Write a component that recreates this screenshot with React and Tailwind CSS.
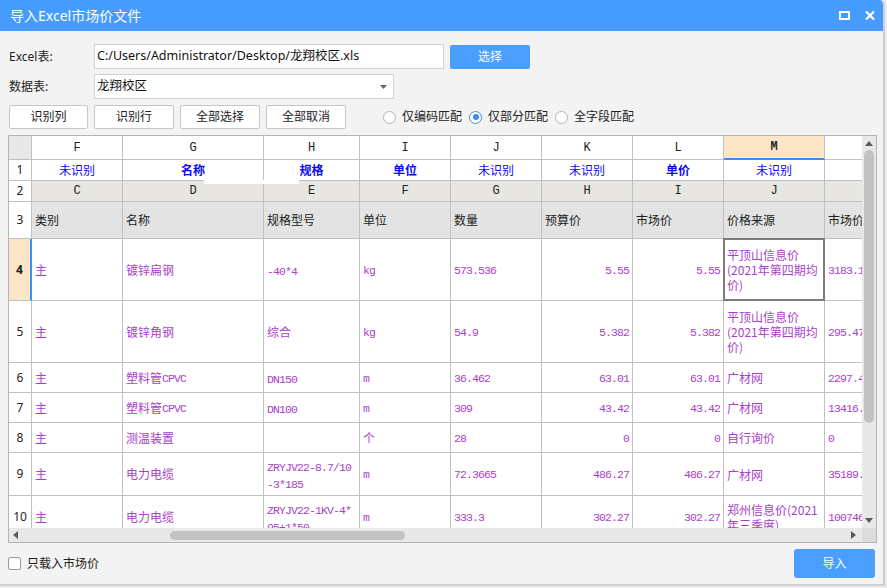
import React from "react";

const W = ["w-[23px]", "w-[91px]", "w-[141px]", "w-[96px]", "w-[91px]", "w-[91px]", "w-[91px]", "w-[91px]", "w-[101px]", "w-[100px]"];
const CJK = /[\u2E80-\u9FFF\uFF00-\uFFEF\u3000-\u303F]/;
const PURPLE = "text-[#a83fc8]";

function Mix({ text }) {
  const parts = text.split(/([\u2E80-\u9FFF\uFF00-\uFFEF\u3000-\u303F]+)/).filter(Boolean);
  return parts.map((p, i) =>
    CJK.test(p) ? (
      <span key={i} className="font-['Noto_Sans_CJK_SC',sans-serif] text-[12px]">{p}</span>
    ) : (
      <span key={i} className="relative top-[1px] font-['Liberation_Mono',monospace] text-[11.5px] tracking-[-0.9px]">{p}</span>
    )
  );
}

function Cell({ i, h, className = "", children }) {
  return (
    <div className={`${W[i]} ${h} shrink-0 border-r border-b border-[#c0c0c0] flex items-center overflow-hidden whitespace-nowrap ${className}`}>
      {children}
    </div>
  );
}

const rows = [
  { n: "4", h: "h-[62px]", sel: true, c: ["主", "镀锌扁钢", ["-40*4"], "kg", "573.536", "5.55", "5.55", ["平顶山信息价", "(2021年第四期均", "价)"], "3183.13"] },
  { n: "5", h: "h-[62px]", c: ["主", "镀锌角钢", ["综合"], "kg", "54.9", "5.382", "5.382", ["平顶山信息价", "(2021年第四期均", "价)"], "295.47"] },
  { n: "6", h: "h-[30px]", c: ["主", "塑料管CPVC", ["DN150"], "m", "36.462", "63.01", "63.01", ["广材网"], "2297.41"] },
  { n: "7", h: "h-[30px]", c: ["主", "塑料管CPVC", ["DN100"], "m", "309", "43.42", "43.42", ["广材网"], "13416.78"] },
  { n: "8", h: "h-[30px]", c: ["主", "测温装置", [""], "个", "28", "0", "0", ["自行询价"], "0"] },
  { n: "9", h: "h-[43px]", c: ["主", "电力电缆", ["ZRYJV22-8.7/10", "-3*185"], "m", "72.3665", "486.27", "486.27", ["广材网"], "35189.66"] },
  { n: "10", h: "h-[43px]", c: ["主", "电力电缆", ["ZRYJV22-1KV-4*", "95+1*50"], "m", "333.3", "302.27", "302.27", ["郑州信息价(2021", "年三季度)"], "100746.5"] },
];

const row1 = [
  { t: "未识别" }, { t: "名称", b: true }, { t: "规格", b: true }, { t: "单位", b: true },
  { t: "未识别" }, { t: "未识别" }, { t: "单价", b: true }, { t: "未识别" }, { t: "" },
];
const row2 = ["C", "D", "E", "F", "G", "H", "I", "J", ""];
const row3 = ["类别", "名称", "规格型号", "单位", "数量", "预算价", "市场价", "价格来源", "市场价"];
const colLetters = ["F", "G", "H", "I", "J", "K", "L", "M", ""];

function RowNum({ n, h, sel }) {
  return (
    <Cell
      i={0}
      h={h}
      className={`justify-center font-['Noto_Sans',sans-serif] text-[12px] text-[#222] ${sel ? "bg-[#fde6c8] font-bold border-r-2 border-r-[#3d8eff]" : "bg-white"}`}
    >
      {n}
    </Cell>
  );
}

function Radio({ checked, label }) {
  return (
    <div className="flex items-center gap-[6px]">
      <div className={`w-[13px] h-[13px] rounded-full border bg-white flex items-center justify-center ${checked ? "border-[#3b8ef0]" : "border-[#b4b4b4]"}`}>
        {checked && <div className="w-[6px] h-[6px] rounded-full bg-[#3b8ef0]" />}
      </div>
      <span className="text-[12px] text-[#222]">{label}</span>
    </div>
  );
}

function Btn({ w, children }) {
  return (
    <div className={`${w} h-[24px] bg-white border border-[#c6c6c6] rounded-[2px] flex items-center justify-center text-[12px] text-[#222]`}>
      {children}
    </div>
  );
}

export default function App() {
  return (
    <div className="w-[887px] h-[588px] bg-[#ececec] overflow-hidden font-['Noto_Sans','Noto_Sans_CJK_SC',sans-serif]">
      <div className="w-[885px] h-[586px] bg-[#f3f3f3] flex flex-col border-r-2 border-b-2 border-[#cfcfcf] rounded-tr-[5px] overflow-hidden">
        {/* title bar */}
        <div className="h-[31px] shrink-0 bg-[#459cfe] flex items-center pl-[10px] text-white text-[14px]">
          <span>导入Excel市场价文件</span>
          <div className="ml-auto flex items-center gap-[15px] mr-[8px]">
            <svg width="11" height="9" viewBox="0 0 11 9">
              <rect x="1" y="1" width="9" height="7" fill="none" stroke="white" strokeWidth="2" />
            </svg>
            <svg width="10" height="9" viewBox="0 0 10 9">
              <path d="M1 0.5 L9 8.5 M9 0.5 L1 8.5" stroke="white" strokeWidth="2.2" />
            </svg>
          </div>
        </div>

        {/* body */}
        <div className="flex flex-col px-[8px]">
          <div className="mt-[13px] flex items-center h-[25px] pl-[1px]">
            <span className="w-[85px] text-[12px] text-[#222]">Excel表:</span>
            <div className="w-[350px] h-[25px] bg-white border border-[#d2d2d2] flex items-center pl-[2px] text-[12.5px] text-[#111]">
              C:/Users/Administrator/Desktop/龙翔校区.xls
            </div>
            <div className="ml-[6px] w-[80px] h-[24px] bg-[#4a9efe] rounded-[2px] flex items-center justify-center text-white text-[12px]">选择</div>
          </div>
          <div className="mt-[5px] flex items-center h-[25px] pl-[1px]">
            <span className="w-[85px] text-[12px] text-[#222]">数据表:</span>
            <div className="w-[300px] h-[25px] bg-white border border-[#d2d2d2] flex items-center pl-[2px] pr-[6px] text-[12.5px] text-[#111]">
              <span>龙翔校区</span>
              <svg className="ml-auto" width="7" height="4" viewBox="0 0 7 4">
                <path d="M0 0 L7 0 L3.5 4 Z" fill="#666" />
              </svg>
            </div>
          </div>
          <div className="mt-[6px] flex items-center h-[24px] pl-[1px] gap-[6px]">
            <Btn w="w-[79px]">识别列</Btn>
            <Btn w="w-[80px]">识别行</Btn>
            <Btn w="w-[80px]">全部选择</Btn>
            <Btn w="w-[80px]">全部取消</Btn>
            <div className="ml-[31px] flex items-center gap-[7px]">
              <Radio label="仅编码匹配" />
              <Radio checked label="仅部分匹配" />
              <Radio label="全字段匹配" />
            </div>
          </div>

          {/* grid */}
          <div className="mt-[6px] w-[869px] h-[408px] border border-[#b4b4b4] flex flex-col bg-white">
            <div className="flex h-[392px]">
              <div className="relative w-[853px] h-[392px] overflow-hidden">
                <div className="flex flex-col w-[916px]">
                  {/* column header */}
                  <div className="flex">
                    <Cell i={0} h="h-[24px]" className="bg-[#e8e8e8]" />
                    {colLetters.map((l, k) => (
                      <Cell
                        key={k}
                        i={k + 1}
                        h="h-[24px]"
                        className={`justify-center font-['Liberation_Mono',monospace] text-[12px] text-[#222] ${l === "M" ? "bg-[#fde6c8] font-bold border-b-2 border-b-[#3d8eff]" : "bg-white"}`}
                      >
                        {l}
                      </Cell>
                    ))}
                  </div>
                  {/* row 1 */}
                  <div className="flex">
                    <RowNum n="1" h="h-[21px]" />
                    {row1.map((c, k) => (
                      <Cell key={k} i={k + 1} h="h-[21px]" className={`justify-center bg-white text-[12px] text-[#0a0af5] font-['Noto_Sans_CJK_SC',sans-serif] ${c.b ? "font-bold" : ""}`}>
                        {c.t}
                      </Cell>
                    ))}
                  </div>
                  {/* row 2 */}
                  <div className="flex">
                    <RowNum n="2" h="h-[21px]" />
                    {row2.map((c, k) => (
                      <Cell key={k} i={k + 1} h="h-[21px]" className="justify-center bg-[#e7e6e2] font-['Liberation_Mono',monospace] text-[12px] text-[#222]">
                        {c}
                      </Cell>
                    ))}
                  </div>
                  {/* row 3 */}
                  <div className="flex">
                    <RowNum n="3" h="h-[37px]" />
                    {row3.map((c, k) => (
                      <Cell key={k} i={k + 1} h="h-[37px]" className="pl-[3px] bg-[#e3e3e3] font-['Noto_Sans_CJK_SC',sans-serif] text-[12px] text-[#222]">
                        {c}
                      </Cell>
                    ))}
                  </div>
                  {/* data */}
                  {rows.map((r) => (
                    <div key={r.n} className="flex">
                      <RowNum n={r.n} h={r.h} sel={r.sel} />
                      {r.c.map((v, k) => {
                        const right = k === 5 || k === 6;
                        if (k === 7) {
                          return (
                            <Cell key={k} i={k + 1} h={r.h} className={`pl-[3px] bg-white ${PURPLE} font-['Noto_Sans_CJK_SC',sans-serif] text-[12px]`}>
                              <div className="flex flex-col leading-[15px]">
                                {v.map((ln, j) => (
                                  <span key={j}>{ln}</span>
                                ))}
                              </div>
                            </Cell>
                          );
                        }
                        if (Array.isArray(v)) {
                          return (
                            <Cell key={k} i={k + 1} h={r.h} className={`pl-[3px] bg-white ${PURPLE}`}>
                              <div className="flex flex-col leading-[14px]">
                                {v.map((ln, j) => (
                                  <span key={j}>
                                    <Mix text={ln} />
                                  </span>
                                ))}
                              </div>
                            </Cell>
                          );
                        }
                        return (
                          <Cell key={k} i={k + 1} h={r.h} className={`${right ? "justify-end pr-[3px]" : "pl-[3px]"} bg-white ${PURPLE}`}>
                            <Mix text={v} />
                          </Cell>
                        );
                      })}
                    </div>
                  ))}
                </div>
                {/* selected cell frame */}
                <div className="absolute left-[714px] top-[102px] w-[102px] h-[63px] border-2 border-[#7c7c7c]" />
                {/* white artifact bar */}
                <div className="absolute left-[195px] top-[44px] w-[95px] h-[4px] bg-white" />
              </div>
              {/* vertical scrollbar */}
              <div className="w-[14px] h-[392px] bg-[#e8e8e8] flex flex-col items-center">
                <svg className="mt-[5px]" width="8" height="5" viewBox="0 0 8 5">
                  <path d="M0 5 L8 5 L4 0 Z" fill="#5a5a5a" />
                </svg>
                <div className="mt-[4px] w-[10px] h-[273px] rounded-full bg-[#c2c2c2]" />
                <svg className="mt-auto mb-[5px]" width="8" height="5" viewBox="0 0 8 5">
                  <path d="M0 0 L8 0 L4 5 Z" fill="#5a5a5a" />
                </svg>
              </div>
            </div>
            <div className="flex h-[14px]">
              <div className="w-[853px] h-[14px] bg-[#e8e8e8] flex items-center">
                <svg className="ml-[4px]" width="5" height="8" viewBox="0 0 5 8">
                  <path d="M5 0 L5 8 L0 4 Z" fill="#5a5a5a" />
                </svg>
                <div className="ml-[152px] w-[235px] h-[9px] rounded-full bg-[#c2c2c2]" />
                <svg className="ml-auto mr-[6px]" width="5" height="8" viewBox="0 0 5 8">
                  <path d="M0 0 L0 8 L5 4 Z" fill="#5a5a5a" />
                </svg>
              </div>
              <div className="w-[14px] h-[14px] bg-[#dcdcdc]" />
            </div>
          </div>

          {/* bottom */}
          <div className="mt-[6px] h-[29px] flex items-center">
            <div className="w-[13px] h-[13px] bg-white border border-[#9a9a9a] rounded-[2px]" />
            <span className="ml-[6px] text-[12px] text-[#222]">只载入市场价</span>
            <div className="ml-auto w-[81px] h-[29px] bg-[#4a9efe] rounded-[3px] flex items-center justify-center text-white text-[12px]">导入</div>
          </div>
        </div>
      </div>
    </div>
  );
}
